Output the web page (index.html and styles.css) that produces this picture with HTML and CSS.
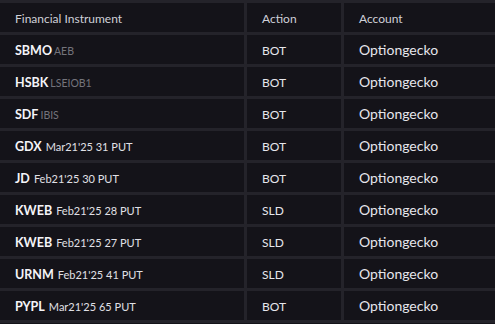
FILE: index.html
```html
<!DOCTYPE html>
<html lang="en">
<head>
  <meta charset="UTF-8">
  <title>Trades</title>
  <link rel="stylesheet" href="styles.css">
</head>
<body>
  <div class="trades">
    <div class="cell head">Financial Instrument</div>
    <div class="cell head">Action</div>
    <div class="cell head">Account</div>

    <div class="cell"><span class="sym">SBMO</span><span class="exch">AEB</span></div>
    <div class="cell action">BOT</div>
    <div class="cell account">Optiongecko</div>

    <div class="cell"><span class="sym">HSBK</span><span class="exch">LSEIOB1</span></div>
    <div class="cell action">BOT</div>
    <div class="cell account">Optiongecko</div>

    <div class="cell"><span class="sym">SDF</span><span class="exch">IBIS</span></div>
    <div class="cell action">BOT</div>
    <div class="cell account">Optiongecko</div>

    <div class="cell"><span class="sym">GDX</span><span class="desc">Mar21'25 31 PUT</span></div>
    <div class="cell action">BOT</div>
    <div class="cell account">Optiongecko</div>

    <div class="cell"><span class="sym">JD</span><span class="desc">Feb21'25 30 PUT</span></div>
    <div class="cell action">BOT</div>
    <div class="cell account">Optiongecko</div>

    <div class="cell"><span class="sym">KWEB</span><span class="desc">Feb21'25 28 PUT</span></div>
    <div class="cell action">SLD</div>
    <div class="cell account">Optiongecko</div>

    <div class="cell"><span class="sym">KWEB</span><span class="desc">Feb21'25 27 PUT</span></div>
    <div class="cell action">SLD</div>
    <div class="cell account">Optiongecko</div>

    <div class="cell"><span class="sym">URNM</span><span class="desc">Feb21'25 41 PUT</span></div>
    <div class="cell action">SLD</div>
    <div class="cell account">Optiongecko</div>

    <div class="cell"><span class="sym">PYPL</span><span class="desc">Mar21'25 65 PUT</span></div>
    <div class="cell action">BOT</div>
    <div class="cell account">Optiongecko</div>
  </div>
</body>
</html>
```

FILE: styles.css
```css
* {
  box-sizing: border-box;
}
body {
  margin: 0;
  background: #141319;
  font-family: 'Lato', 'Liberation Sans', sans-serif;
  overflow: hidden;
}
/* grid lines are the gaps showing the background */
.trades {
  display: grid;
  grid-template-columns: 244px 94px 1fr;
  grid-auto-rows: 29px;
  gap: 3px;
  padding: 3px 0;
  background: #24232a;
  width: 100%;
}
.cell {
  background: #141319;
  padding: 0 15px;
  display: flex;
  align-items: baseline;
  padding-top: 8px;
  white-space: nowrap;
  color: #e6e6ec;
}
.head {
  font-size: 12px;
  color: #cfd0d8;
}
.sym {
  font-weight: 700;
  font-size: 12.5px;
  color: #f4f4f8;
}
.exch {
  font-size: 10.5px;
  color: #74747c;
  margin-left: 2px;
}
.desc {
  font-size: 11px;
  color: #e0e0e6;
  margin-left: 4px;
}
.action {
  font-size: 12px;
}
.account {
  font-size: 14px;
  padding-top: 6px;
}
```
